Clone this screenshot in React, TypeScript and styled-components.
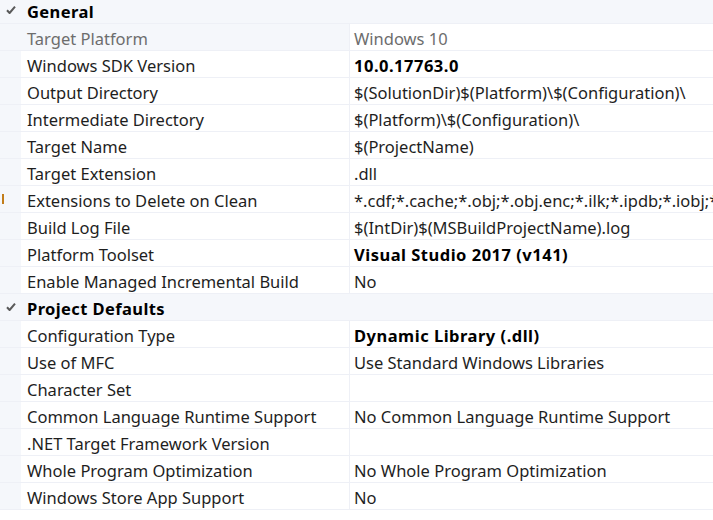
import { FC } from 'react';
import styled, { createGlobalStyle } from 'styled-components';

type Prop = {
	name: string;
	value: string;
	bold?: boolean;
	readOnly?: boolean;
	changed?: boolean;
};

type Category = {
	title: string;
	props: Prop[];
};

const categories: Category[] = [
	{
		title: 'General',
		props: [
			{ name: 'Target Platform', value: 'Windows 10', readOnly: true },
			{ name: 'Windows SDK Version', value: '10.0.17763.0', bold: true },
			{ name: 'Output Directory', value: '$(SolutionDir)$(Platform)\\$(Configuration)\\' },
			{ name: 'Intermediate Directory', value: '$(Platform)\\$(Configuration)\\' },
			{ name: 'Target Name', value: '$(ProjectName)' },
			{ name: 'Target Extension', value: '.dll' },
			{
				name: 'Extensions to Delete on Clean',
				value: '*.cdf;*.cache;*.obj;*.obj.enc;*.ilk;*.ipdb;*.iobj;*.resources;*.tlb;*.tli;*.tlh;*.tmp',
				changed: true,
			},
			{ name: 'Build Log File', value: '$(IntDir)$(MSBuildProjectName).log' },
			{ name: 'Platform Toolset', value: 'Visual Studio 2017 (v141)', bold: true },
			{ name: 'Enable Managed Incremental Build', value: 'No' },
		],
	},
	{
		title: 'Project Defaults',
		props: [
			{ name: 'Configuration Type', value: 'Dynamic Library (.dll)', bold: true },
			{ name: 'Use of MFC', value: 'Use Standard Windows Libraries' },
			{ name: 'Character Set', value: '' },
			{ name: 'Common Language Runtime Support', value: 'No Common Language Runtime Support' },
			{ name: '.NET Target Framework Version', value: '' },
			{ name: 'Whole Program Optimization', value: 'No Whole Program Optimization' },
			{ name: 'Windows Store App Support', value: 'No' },
		],
	},
];

const GlobalStyle = createGlobalStyle`
	html, body {
		margin: 0;
		padding: 0;
		background: #ffffff;
		overflow: hidden;
	}
	body {
		font-family: 'Noto Sans', 'Open Sans', sans-serif;
		font-size: 16.5px;
		color: #1e1e1e;
	}
`;

const CheckIcon: FC = () => (
	<svg width="10" height="10" viewBox="0 0 10 10">
		<path d="M1 5.2 L3.6 8 L9 1.6" fill="none" stroke="#5a5a5a" strokeWidth="2" strokeLinejoin="round" />
	</svg>
);

const PropertyGrid: FC = () => (
	<Grid>
		{categories.map((cat) => (
			<Section key={cat.title}>
				<CategoryRow>
					<Gutter>
						<CheckIcon />
					</Gutter>
					<CategoryTitle>{cat.title}</CategoryTitle>
				</CategoryRow>
				{cat.props.map((p) => (
					<Row key={p.name}>
						<Gutter>{p.changed && <ChangedMark />}</Gutter>
						<NameCell $readOnly={p.readOnly}>{p.name}</NameCell>
						<ValueCell $bold={p.bold} $readOnly={p.readOnly}>
							{p.value}
						</ValueCell>
					</Row>
				))}
			</Section>
		))}
	</Grid>
);

const App: FC = () => (
	<>
		<GlobalStyle />
		<PropertyGrid />
	</>
);

const Grid = styled.div`
	width: 713px;
	height: 520px;
	overflow: hidden;
	display: flex;
	flex-direction: column;
	margin-top: -3px;
`;

const Section = styled.div`
	display: flex;
	flex-direction: column;
`;

const CategoryRow = styled.div`
	display: grid;
	grid-template-columns: 21px 1fr;
	height: 27px;
	align-items: center;
	background: #f5f7fb;
	border-bottom: 1px solid #eef0f6;
	box-sizing: border-box;
`;

const CategoryTitle = styled.div`
	font-weight: 700;
	letter-spacing: 0.4px;
	padding: 2px 0 0 6px;
	color: #000000;
`;

const Row = styled.div`
	display: grid;
	grid-template-columns: 21px 329px 1fr;
	height: 27px;
	border-bottom: 1px solid #eef0f6;
	box-sizing: border-box;
`;

const Gutter = styled.div`
	display: flex;
	align-items: center;
	justify-content: center;
	background: #f5f7fb;
	height: 100%;
`;

const ChangedMark = styled.div`
	width: 2px;
	height: 10px;
	background: #c27d1a;
	margin-right: 16px;
`;

const NameCell = styled.div<{ $readOnly?: boolean }>`
	display: flex;
	align-items: center;
	padding: 2px 0 0 6px;
	background: ${(p) => (p.$readOnly ? '#f5f7fb' : '#ffffff')};
	color: ${(p) => (p.$readOnly ? '#6d6d6d' : '#1e1e1e')};
	border-right: 1px solid #eef0f6;
	white-space: nowrap;
	overflow: hidden;
`;

const ValueCell = styled.div<{ $bold?: boolean; $readOnly?: boolean }>`
	display: flex;
	align-items: center;
	padding: 2px 0 0 4px;
	font-weight: ${(p) => (p.$bold ? 700 : 400)};
	letter-spacing: ${(p) => (p.$bold ? '0.5px' : '0')};
	color: ${(p) => (p.$readOnly ? '#6d6d6d' : p.$bold ? '#000000' : '#1e1e1e')};
	white-space: nowrap;
	overflow: hidden;
`;

export default App;
